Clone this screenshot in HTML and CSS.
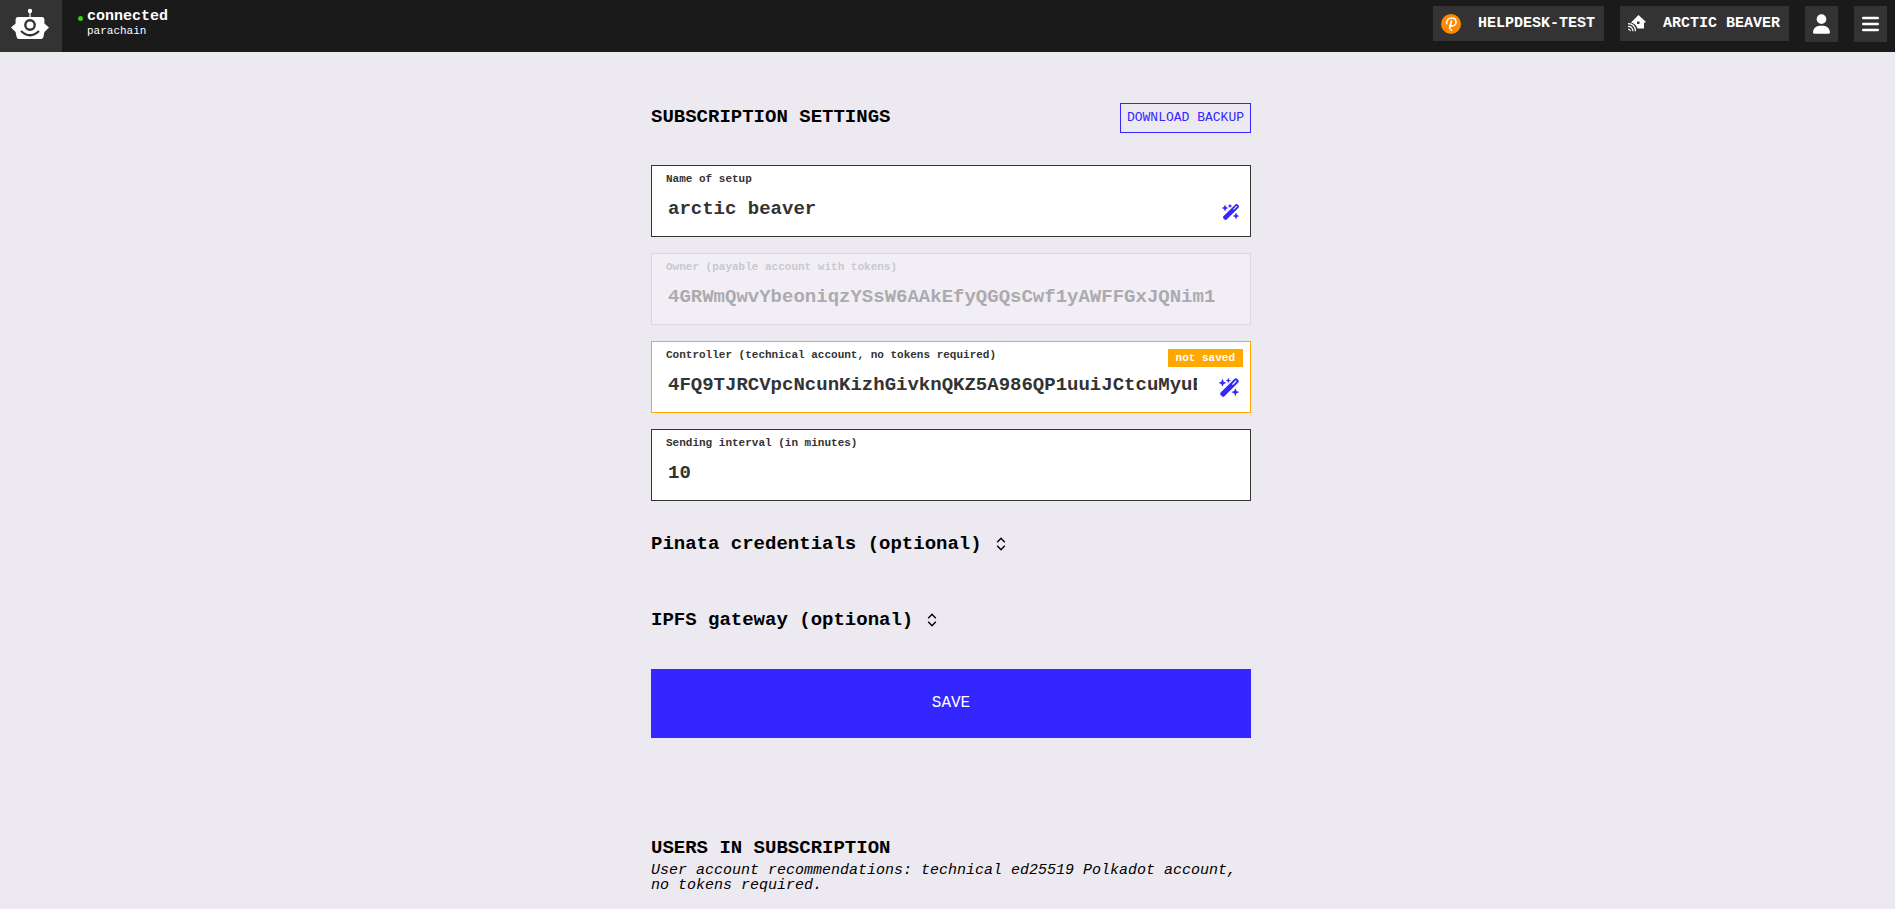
FILE: index.html
```
<!DOCTYPE html>
<html lang="en">
<head>
<meta charset="utf-8">
<title>Subscription settings</title>
<link rel="stylesheet" href="styles.css">
</head>
<body>
<svg class="defs" aria-hidden="true">
  <symbol id="wand" viewBox="0 0 576 512"><path d="M234.7 42.7L197 56.8c-3 1.1-5 4-5 7.2s2 6.1 5 7.2l37.7 14.1L248.8 123c1.1 3 4 5 7.2 5s6.1-2 7.2-5l14.1-37.7L315 71.2c3-1.1 5-4 5-7.2s-2-6.1-5-7.2L277.3 42.7 263.2 5c-1.1-3-4-5-7.2-5s-6.1 2-7.2 5L234.7 42.7zM46.1 395.4c-18.7 18.7-18.7 49.1 0 67.9l34.6 34.6c18.7 18.7 49.1 18.7 67.9 0L529.9 116.5c18.7-18.7 18.7-49.1 0-67.9L495.3 14.1c-18.7-18.7-49.1-18.7-67.9 0L46.1 395.4zM484.6 82.6l-105 105-23.3-23.3 105-105 23.3 23.3zM7.5 117.2C3 118.9 0 123.2 0 128s3 9.1 7.5 10.8L64 160l21.2 56.5c1.7 4.5 6 7.5 10.8 7.5s9.1-3 10.8-7.5L128 160l56.5-21.2c4.5-1.7 7.5-6 7.5-10.8s-3-9.1-7.5-10.8L128 96 106.8 39.5C105.1 35 100.8 32 96 32s-9.1 3-10.8 7.5L64 96 7.5 117.2zm352 256c-4.5 1.7-7.5 6-7.5 10.8s3 9.1 7.5 10.8L416 416l21.2 56.5c1.7 4.5 6 7.5 10.8 7.5s9.1-3 10.8-7.5L480 416l56.5-21.2c4.5-1.7 7.5-6 7.5-10.8s-3-9.1-7.5-10.8L480 352l-21.2-56.5c-1.7-4.5-6-7.5-10.8-7.5s-9.1 3-10.8 7.5L416 352l-56.5 21.2z"/></symbol>
  <symbol id="sort" viewBox="0 0 10 14"><path d="M1.2 5.2 5 1.2l3.8 4M1.2 8.8 5 12.8l3.8-4" fill="none" stroke="currentColor" stroke-width="1.4"/></symbol>
</svg>

<header class="topbar">
  <a class="logo" href="#" aria-label="Home">
    <svg viewBox="0 0 38 32" width="38" height="32">
      <circle cx="19" cy="3" r="2.2" fill="#fff"/>
      <path d="M19 4v7" stroke="#fff" stroke-width="1.2"/>
      <path d="M7 9h24q2 0 2.400 2v4.500l4.600 4-4.600 4.500-1 5q-.4 2-2.400 2H8q-2 0-2.400-2l-1-5L0 19.500 4.600 15.500v-4.500Q5 9 7 9z" fill="#fff"/>
      <circle cx="19" cy="17" r="4.700" fill="none" stroke="#333" stroke-width="2.400"/>
      <path d="M10 23q9 8.500 18 0" fill="none" stroke="#333" stroke-width="2.200"/>
    </svg>
  </a>
  <div class="status">
    <span class="dot"></span>
    <div class="status-text"><b>connected</b><span>parachain</span></div>
  </div>
  <nav class="actions">
    <button class="chip" type="button">
      <svg viewBox="0 0 20 20" width="20" height="20">
        <circle cx="10" cy="10" r="10" fill="#ff8a00"/>
        <path d="M5.600 9.600C5.600 6.200 7.800 4 10.800 4c2.500 0 4.200 1.700 4.200 3.900 0 2.400-1.900 4-4.300 4-1.200 0-1.900-.4-1.900-.4M10.500 7 8.600 14.500" fill="none" stroke="#fff" stroke-width="1.700" stroke-linecap="round"/>
        <circle cx="10.300" cy="16" r=".9" fill="#fff"/>
      </svg>
      HELPDESK-TEST
    </button>
    <button class="chip" type="button">
      <svg viewBox="0 0 18 18" width="18" height="18">
        <path fill-rule="evenodd" d="M10.500 0l7.500 7-2 1v5.500H9.500C8.500 10.500 6 8 3 7.500zM9 6.500v2.500h2.500V6.500z" fill="#fff"/>
        <path d="M0 8.700q7 0 7.500 7.500M0 11.400q4.500 0 5 4.800M0 14q2 0 2.500 2.200" fill="none" stroke="#fff" stroke-width="1.200"/>
      </svg>
      ARCTIC BEAVER
    </button>
    <button class="square" type="button" aria-label="Account">
      <svg viewBox="0 0 448 512" width="17" height="20"><path fill="#fff" d="M224 256A128 128 0 1 0 224 0a128 128 0 1 0 0 256zm-45.700 48C79.800 304 0 383.800 0 482.300C0 498.700 13.300 512 29.700 512H418.300c16.400 0 29.700-13.300 29.700-29.700C448 383.800 368.200 304 269.700 304H178.300z"/></svg>
    </button>
    <button class="square" type="button" aria-label="Menu">
      <svg viewBox="0 0 17 16" width="17" height="16"><path d="M1.200 2h14.600M1.200 8h14.600M1.200 14h14.600" stroke="#fff" stroke-width="2.400" stroke-linecap="round"/></svg>
    </button>
  </nav>
</header>

<main class="page">
  <div class="content">
    <div class="title-row">
      <h1>SUBSCRIPTION SETTINGS</h1>
      <button class="outline" type="button">DOWNLOAD BACKUP</button>
    </div>

    <form class="form">
      <div class="field">
        <label for="name">Name of setup</label>
        <div class="control">
          <input id="name" type="text" value="arctic beaver">
          <button class="wand" type="button" aria-label="Generate name"><svg class="wand-small"><use href="#wand"/></svg></button>
        </div>
      </div>
      <div class="field disabled">
        <label for="owner">Owner (payable account with tokens)</label>
        <div class="control">
          <input id="owner" type="text" value="4GRWmQwvYbeoniqzYSsW6AAkEfyQGQsCwf1yAWFFGxJQNim1" disabled>
        </div>
      </div>
      <div class="field unsaved">
        <label for="controller">Controller (technical account, no tokens required)</label>
        <span class="badge">not saved</span>
        <div class="control">
          <input id="controller" type="text" value="4FQ9TJRCVpcNcunKizhGivknQKZ5A986QP1uuiJCtcuMyuE">
          <button class="wand" type="button" aria-label="Generate controller"><svg class="wand-large"><use href="#wand"/></svg></button>
        </div>
      </div>
      <div class="field">
        <label for="interval">Sending interval (in minutes)</label>
        <div class="control"><input id="interval" type="text" value="10"></div>
      </div>

      <details class="group"><summary>Pinata credentials (optional) <svg class="sort"><use href="#sort"/></svg></summary></details>
      <details class="group"><summary>IPFS gateway (optional) <svg class="sort"><use href="#sort"/></svg></summary></details>

      <button class="save" type="submit">SAVE</button>
    </form>

    <section class="users">
      <h2>USERS IN SUBSCRIPTION</h2>
      <p>User account recommendations: technical ed25519 Polkadot account, no tokens required.</p>
    </section>
  </div>
</main>
</body>
</html>
```
FILE: styles.css
```
* { box-sizing: border-box; }

body {
  margin: 0;
  background: #ece9f0;
  color: #000;
  font-family: "Liberation Mono", "Courier New", monospace;
}

button, input { font-family: inherit; margin: 0; }
button { cursor: pointer; border: 0; }
svg { display: block; flex: none; }
.defs { display: none; }

.topbar {
  display: flex;
  height: 52px;
  background: #1a1a1a;
  color: #fff;
}

.logo {
  display: flex;
  justify-content: center;
  width: 62px;
  padding: 8px 2px 0 0;
  background: #333;
}

.status { display: flex; gap: 4px; padding: 9px 0 0 16px; }
.dot { width: 5px; height: 5px; margin-top: 7px; border-radius: 50%; background: #37ce10; }
.status-text { display: flex; flex-direction: column; }
.status-text b { font-size: 15px; line-height: 16px; }
.status-text span { font-size: 11px; line-height: 13px; }

.actions {
  display: flex;
  align-items: flex-start;
  gap: 16px;
  margin-left: auto;
  padding: 6px 8px 0 0;
}

.chip {
  display: flex;
  align-items: center;
  gap: 17px;
  height: 35px;
  padding: 0 9px 0 8px;
  background: #333;
  color: #fff;
  font-size: 15px;
  font-weight: bold;
}

.square {
  display: flex;
  align-items: center;
  justify-content: center;
  width: 33px;
  height: 36px;
  padding: 0;
  background: #333;
}

.page { padding: 51px 0 24px 7px; }
.content { max-width: 600px; margin: 0 auto; }

.title-row {
  display: flex;
  align-items: center;
  justify-content: space-between;
  margin-bottom: 32px;
}

h1, h2 { margin: 0; font-size: 19px; line-height: 22px; }
h1 { padding-bottom: 2px; }

.outline {
  height: 30px;
  padding: 0 6px 2px;
  border: 1px solid #3326ff;
  background: transparent;
  color: #3326ff;
  font-size: 13px;
}

.form { display: flex; flex-direction: column; }

.field {
  position: relative;
  margin-bottom: 16px;
  padding: 7px 0 4px;
  border: 1px solid #333;
  background: #fff;
  color: #333;
}

.field label {
  display: block;
  padding-left: 14px;
  font-size: 11px;
  font-weight: bold;
  line-height: 12px;
}

.control { display: flex; height: 47px; padding-left: 16px; }

.control input {
  flex: 1;
  min-width: 0;
  padding: 0;
  border: 0;
  background: transparent;
  color: #333;
  font-size: 19px;
  font-weight: bold;
  outline: none;
}

.wand {
  display: flex;
  align-items: center;
  justify-content: flex-end;
  width: 53px;
  padding: 6px 10px 0 0;
  background: transparent;
  color: #3326ff;
  fill: currentColor;
}

.wand-small { width: 18px; height: 16px; }
.wand-large { width: 21px; height: 19px; }

.disabled { border-color: #dad8dd; background: #f1eff5; }
.disabled label { color: #cac8cc; }
.disabled input { color: #acaaae; }

.unsaved { border-color: #ffa800; }

.badge {
  position: absolute;
  top: 7px;
  right: 7px;
  padding: 0 8px;
  background: #ffa800;
  color: #fff;
  font-size: 11px;
  font-weight: bold;
  line-height: 18px;
}

.group { margin: 16px 0 38px; }
.group + .group { margin: 0 0 22px; }

.group summary {
  display: flex;
  align-items: center;
  gap: 14px;
  font-size: 19px;
  font-weight: bold;
  line-height: 22px;
  padding: 0 0 16px;
  list-style: none;
  cursor: pointer;
}

.sort { width: 10px; height: 14px; }

.save {
  height: 69px;
  padding: 0 0 2px;
  background: #3326ff;
  color: #fff;
  font-size: 16px;
}

.users { padding-top: 99px; }
.users p { margin: 4px 0 0; font-size: 15px; font-style: italic; line-height: 15px; }
```
